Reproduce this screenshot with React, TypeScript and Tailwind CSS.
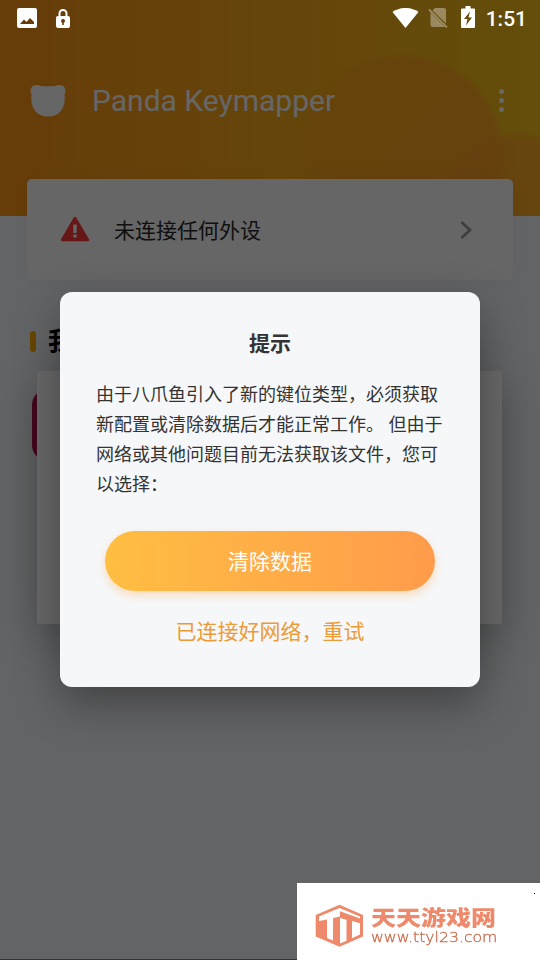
function StatusBar() {
  return (
    <div className="relative z-30 flex h-9 items-center text-white">
      <svg className="ml-[17px] h-5 w-5" viewBox="0 0 20 20">
        <path
          fill="currentColor"
          fillRule="evenodd"
          d="M2 0h16a2 2 0 0 1 2 2v16a2 2 0 0 1-2 2H2a2 2 0 0 1-2-2V2a2 2 0 0 1 2-2ZM3 16h14v-2l-4-4-3.500 4L7 11.500l-4 4.500Z"
        />
      </svg>
      <svg className="ml-[19px] h-[19px] w-[14px]" viewBox="0 0 14 19">
        <path d="M3.500 8V4.500a3.500 3.500 0 0 1 7 0V8" fill="none" stroke="currentColor" strokeWidth="2" />
        <path
          fill="currentColor"
          fillRule="evenodd"
          d="M2 7h10a2 2 0 0 1 2 2v8a2 2 0 0 1-2 2H2a2 2 0 0 1-2-2V9a2 2 0 0 1 2-2ZM5 12a2 2 0 0 0 1.200 1.800V16h1.600v-2.200A2 2 0 1 0 5 12Z"
        />
      </svg>
      <div className="flex-1" />
      <svg className="mr-[9px] h-[21px] w-[27px]" viewBox="0 0 27 21">
        <path fill="currentColor" d="M0.500 4a23 23 0 0 1 26 0L13.500 20Z" />
      </svg>
      <svg className="mr-[13px] h-5 w-5 opacity-35" viewBox="0 0 20 20">
        <path fill="currentColor" d="M7 0h9a2 2 0 0 1 2 2v13.500L4.500 2.500ZM2.500 4.500 17 19H4.500a2 2 0 0 1-2-2Z" />
        <path d="M1 1.500 19 19.500" stroke="currentColor" strokeWidth="1.800" />
      </svg>
      <svg className="mr-[11px] -mt-[2px] h-[22px] w-[14px]" viewBox="0 0 14 22">
        <path
          fill="currentColor"
          fillRule="evenodd"
          d="M4.500 0h5v2.500H13a1 1 0 0 1 1 1V21a1 1 0 0 1-1 1H1a1 1 0 0 1-1-1V3.500a1 1 0 0 1 1-1h3.500ZM9 5.500 3 13h3.500L5 19.500l6-8H7.500Z"
        />
      </svg>
      <span className="mr-[13px] pt-[2px] font-[Roboto] text-[21px] leading-none font-medium">1:51</span>
    </div>
  );
}

function Header() {
  return (
    <header className="relative h-[216px] overflow-hidden bg-linear-to-r from-[#ff9617] to-[#fac31c]">
      <div className="absolute top-[55px] left-[302px] h-[200px] w-[200px] rounded-full bg-linear-to-br from-[#feaa1b] via-[#ffa31f] to-[#ffa02d] opacity-80 blur-[2px]" />
      <div className="absolute top-[135px] left-[442px] h-[150px] w-[150px] rounded-full bg-linear-to-r from-[#ff9d2b] to-[#ffb01f] opacity-80 blur-[2px]" />
      <StatusBar />
      <div className="relative flex h-[129px] items-center pr-9 pl-[30px] text-white">
        <svg className="h-8 w-9" viewBox="0 0 36 32">
          <path
            fill="currentColor"
            d="M6.500 0c2.500 0 4 .6 5 1.300h13c1-.7 2.500-1.300 5-1.300 5.500 0 7.500 6 4.800 9.500.5 2 .5 5 .2 7.500C33.500 26 27 31.500 18 31.500S2.500 26 1.500 17c-.3-2.500-.3-5.500.2-7.500C-1 6 1 0 6.500 0Z"
          />
        </svg>
        <h1 className="ml-[26px] font-[Roboto] text-[30px] font-normal">Panda Keymapper</h1>
        <div className="ml-auto flex flex-col gap-1">
          <i className="h-[5px] w-[5px] rounded-full bg-white" />
          <i className="h-[5px] w-[5px] rounded-full bg-white" />
          <i className="h-[5px] w-[5px] rounded-full bg-white" />
        </div>
      </div>
    </header>
  );
}

function DeviceCard() {
  return (
    <div className="relative mx-[27px] -mt-[37px] flex h-[101px] items-center rounded-[5px] bg-white pr-10 pl-[33px] shadow-[0_2px_24px_rgba(0,0,0,0.04)]">
      <svg className="h-[27px] w-[30px]" viewBox="0 0 30 27">
        <path d="M15 2 28 24H2Z" fill="#ff3a38" stroke="#ff3a38" strokeWidth="2.500" strokeLinejoin="round" />
        <path d="M13.300 8.500h3.400v8.500h-3.400ZM13.300 18.500h3.400v3h-3.400Z" fill="#fff" />
      </svg>
      <span className="ml-6 pt-[4px] text-[21px] leading-none text-[#292929]">未连接任何外设</span>
      <svg className="ml-auto h-5 w-[14px]" viewBox="0 0 14 20">
        <path d="M2.500 2 11 10l-8.500 8" fill="none" stroke="#9b9b9b" strokeWidth="2.800" />
      </svg>
    </div>
  );
}

function TipDialog() {
  return (
    <div className="absolute top-[292px] left-[60px] z-20 flex h-[395px] w-[420px] flex-col items-center rounded-xl bg-[#f6f7f9] pt-[37px] shadow-[0_16px_44px_rgba(0,0,0,0.34)]">
      <h2 className="text-[21px] leading-[30px] font-bold text-[#333]">提示</h2>
      <p className="mt-[21px] w-full pl-9 text-[18px] leading-[30px] whitespace-nowrap text-[#333]">
        由于八爪鱼引入了新的键位类型，必须获取
        <br />
        新配置或清除数据后才能正常工作。 但由于
        <br />
        网络或其他问题目前无法获取该文件，您可
        <br />
        以选择：
      </p>
      <button className="mt-[31px] h-[60px] w-[330px] rounded-full bg-linear-to-r from-[#ffbe42] via-[#ffad47] to-[#ff9b4b] pt-[3px] text-[21px] text-white shadow-[0_4px_8px_rgba(255,165,60,0.35)]">
        清除数据
      </button>
      <button className="mt-[26px] text-[21px] leading-[30px] text-[#ed9b38]">已连接好网络，重试</button>
    </div>
  );
}

function Watermark() {
  return (
    <div className="absolute right-0 bottom-0 z-30 flex h-[77px] w-[243px] items-start bg-white pt-[21px] pl-[18px] text-[#ee8a6b]">
      <svg className="h-[44px] w-[49px] shrink-0" viewBox="0 0 49 44">
        <path fill="currentColor" d="M24.500.7 48 11v21.500L24.500 42.800.7 32.500V11Z" />
        <path
          fill="#fff"
          d="M4 12.500 24.500 4 45 12.500v2L25 7.200v5.300L18 14v22.500l-6-2.500V15.500L4 17ZM25 14l6.500 1.700v21L25 39.500ZM37 17l8 2.200v11.300L37 34.200Z"
        />
      </svg>
      <div className="ml-[7px] w-[126px]">
        <div className="mt-[4px] h-[21px] origin-top scale-y-[0.84] text-[25px] leading-6 font-black whitespace-nowrap">天天游戏网</div>
        <div className="origin-left scale-x-[1.12] font-['DejaVu_Sans'] text-[14px] leading-4 font-extralight text-[#c9694a] [-webkit-text-stroke:0.3px]">
          www.ttyl23.com
        </div>
      </div>
      <i className="absolute top-[10px] right-[5px] h-px w-px bg-black" />
    </div>
  );
}

export default function App() {
  return (
    <div className="relative h-[960px] w-[540px] overflow-hidden bg-[#f8fafd] font-[Roboto,'Noto_Sans_CJK_SC',sans-serif]">
      <Header />
      <DeviceCard />
      <div className="mt-[46px] flex items-center pl-[30px]">
        <i className="h-[21px] w-[6px] rounded-full bg-[#ffb000]" />
        <h2 className="ml-[12px] pt-[2px] text-[25px] leading-[28px] font-bold text-black">我的游戏</h2>
      </div>
      <div className="mt-[33px] ml-8 h-[72px] w-[72px] rounded-2xl bg-[#b8124f]" />

      <div className="absolute inset-0 z-10 bg-black/60" />
      <div className="absolute top-[371px] left-[37px] z-10 h-[253px] w-[465px] rounded-[3px] bg-[#686868] shadow-[0_12px_44px_rgba(0,0,0,0.26)]" />
      <TipDialog />
      <div className="absolute bottom-0 left-0 z-20 h-px w-full bg-[#333]" />
      <Watermark />
    </div>
  );
}
